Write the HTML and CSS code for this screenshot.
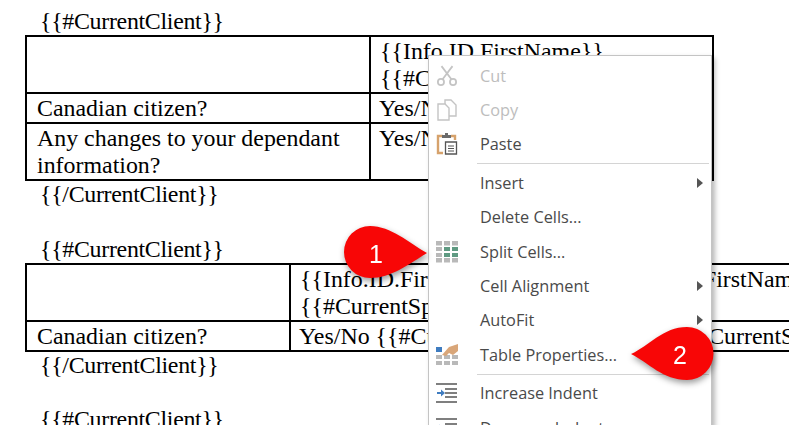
FILE: index.html
```html
<!DOCTYPE html>
<html lang="en">
<head>
<meta charset="utf-8">
<title>Table context menu</title>
<link rel="stylesheet" href="styles.css">
</head>
<body>
<main class="doc">
  <p class="tag">{{#CurrentClient}}</p>
  <table class="grid grid-a">
    <colgroup><col class="a1"><col></colgroup>
    <tr><td></td><td class="indent">{{Info.ID.FirstName}}<br>{{#CurrentSpouse}}</td></tr>
    <tr class="single"><td>Canadian citizen?</td><td>Yes/No</td></tr>
    <tr><td>Any changes to your dependant information?</td><td>Yes/No</td></tr>
  </table>
  <p class="tag">{{/CurrentClient}}</p>
  <p class="tag blank">&nbsp;</p>
  <p class="tag">{{#CurrentClient}}</p>
  <table class="grid grid-b">
    <colgroup><col class="b1"><col class="b2"><col></colgroup>
    <tr><td></td><td class="indent">{{Info.ID.FirstName}}<br>{{#CurrentSpouse}}</td><td class="indent">{{Info.ID.FirstName}}</td></tr>
    <tr class="single"><td>Canadian citizen?</td><td>Yes/No {{#CurrentSpouse}}</td><td>Yes/No {{/CurrentSpouse}}</td></tr>
  </table>
  <p class="tag">{{/CurrentClient}}</p>
  <p class="tag">&nbsp;</p>
  <p class="tag">{{#CurrentClient}}</p>
</main>

<nav class="menu">
  <div class="item off">
    <svg class="ico" viewBox="0 0 20 20"><g fill="none" stroke="#c4c4c4" stroke-width="1.6"><circle cx="4.5" cy="15.5" r="2.8"/><circle cx="15.5" cy="15.5" r="2.8"/><path d="M6 13 15 1M14 13 5 1"/></g></svg>
    <span>Cut</span>
  </div>
  <div class="item off">
    <svg class="ico" viewBox="0 0 20 22"><g fill="#fff" stroke="#c4c4c4" stroke-width="1.4"><path d="M8 1h6l5 5v11H8z"/><path d="M1 5h7l4 4v12H1z"/></g></svg>
    <span>Copy</span>
  </div>
  <div class="item">
    <svg class="ico" viewBox="0 0 20 22"><path d="M6 3H1v17h5" fill="none" stroke="#d6a26c" stroke-width="2.4"/><path d="M14 3h4v4" fill="none" stroke="#d6a26c" stroke-width="2.4"/><path d="M5 2h9v3H5z" fill="#6b6b6b"/><path d="M8 0h3v3H8z" fill="#6b6b6b"/><path d="M8.5 9h11v12h-11z" fill="#fff" stroke="#555" stroke-width="1.3"/><path d="M11 13h6M11 15.5h6M11 18h6" stroke="#555" stroke-width="1"/></svg>
    <span>Paste</span>
  </div>
  <hr class="sep">
  <div class="item"><i class="ico"></i><span>Insert</span><b class="more"></b></div>
  <div class="item"><i class="ico"></i><span>Delete Cells...</span></div>
  <div class="item">
    <svg class="ico" viewBox="0 0 22 22"><path d="M0 0h6v4.500H0zM8 0h6v4.500H8zM16 0h6v4.500h-6zM0 17h6v4.500H0zM8 17h6v4.500H8zM16 17h6v4.500h-6zM0 6h6v4H0zM0 12h6v4H0z" fill="#b9b9b9"/><path d="M8 6h6v4H8zM16 6h6v4h-6zM8 12h6v4H8zM16 12h6v4h-6z" fill="#5f9a82"/></svg>
    <span>Split Cells...</span>
  </div>
  <div class="item"><i class="ico"></i><span>Cell Alignment</span><b class="more"></b></div>
  <div class="item"><i class="ico"></i><span>AutoFit</span><b class="more"></b></div>
  <div class="item">
    <svg class="ico" viewBox="0 0 22 22"><path d="M0 11h6v4H0zM8 11h6v4H8zM16 11h6v4h-6zM0 17h6v4H0zM8 17h6v4H8zM16 17h6v4h-6z" fill="#b9b9b9"/><path d="M0 3h6v5H0z" fill="#3f7cc0"/><path d="M6 11 13 3l9-3v7l-5 4-4-2-3 3z" fill="#d9a679"/></svg>
    <span>Table Properties...</span>
  </div>
  <hr class="sep">
  <div class="item">
    <svg class="ico" viewBox="0 0 22 20"><path d="M0 1h21M9 6h12M9 10h12M9 14h12M0 19h21" stroke="#555" stroke-width="1.6"/><path d="M1 10h5" stroke="#3f7cc0" stroke-width="2"/><path d="M5 6.500 9 10l-4 3.500z" fill="#3f7cc0"/></svg>
    <span>Increase Indent</span>
  </div>
  <div class="item">
    <svg class="ico" viewBox="0 0 22 20"><path d="M0 1h21M9 6h12M9 10h12M9 14h12M0 19h21" stroke="#555" stroke-width="1.6"/><path d="M3 10h5" stroke="#3f7cc0" stroke-width="2"/><path d="M4 6.500 0 10l4 3.500z" fill="#3f7cc0"/></svg>
    <span>Decrease Indent</span>
  </div>
</nav>

<div class="callout c1">
  <svg viewBox="0 0 90 60" width="90" height="60"><path d="M86 28C68 18 50 1 29 1A26 26 0 0 0 29 53C50 53 68 39 86 28Z" fill="#f80606"/></svg>
  <span>1</span>
</div>
<div class="callout c2">
  <svg viewBox="0 0 90 60" width="90" height="60"><path d="M4 29C22 21 36 2 60 2A26.500 26.500 0 0 1 60 55C36 55 22 38 4 29Z" fill="#f80606"/></svg>
  <span>2</span>
</div>
</body>
</html>
```

FILE: styles.css
```css
html, body {
  margin: 0;
  padding: 0;
  height: 425px;
  overflow: hidden;
  background: #fff;
}
body {
  position: relative;
  width: 789px;
}
.doc {
  padding: 8px 0 0 25px;
  font-family: "Liberation Serif", "Times New Roman", serif;
  font-size: 23.9px;
  line-height: 27px;
  color: #000;
}
.tag {
  margin: 0 0 0 15px;
  letter-spacing: -0.3px;
  white-space: nowrap;
}
.blank { margin-bottom: 1px; }
.grid {
  border-collapse: collapse;
  table-layout: fixed;
}
.grid td {
  border: 2px solid #000;
  padding: 0.5px 8px 0.5px 10px;
  vertical-align: top;
}
.grid td + td { padding-left: 8px; }
.grid td.indent { padding-left: 9px; }
.grid-a { width: 689px; }
.a1 { width: 344px; }
.grid-b { width: 900px; }
.b1 { width: 264px; }
.b2 { width: 303px; }
.grid-b td { white-space: nowrap; overflow: hidden; }

.menu {
  position: absolute;
  left: 428px;
  top: 55px;
  width: 284px;
  height: 372px;
  box-sizing: border-box;
  padding: 2.500px 0 0;
  background: #fff;
  border: 1px solid #c4c4c4;
  box-shadow: 3px 3px 5px rgba(0, 0, 0, 0.28);
  font-family: "Open Sans", "Noto Sans", sans-serif;
  font-size: 16.3px;
  color: #4a4a4a;
}
.item {
  display: flex;
  align-items: center;
  height: 34.4px;
  padding-left: 7px;
  position: relative;
}
.item span { margin-left: 22px; }
.ico {
  display: block;
  flex: none;
  width: 22px;
  height: 22px;
}
.off { color: #bdbdbd; }
.more {
  position: absolute;
  right: 8px;
  top: 12px;
  border-left: 6px solid #555;
  border-top: 5px solid transparent;
  border-bottom: 5px solid transparent;
}
.sep {
  height: 1px;
  margin: 1.500px 2px 1.500px 48px;
  border: 0;
  background: #d4d4d4;
}
.callout {
  position: absolute;
  width: 90px;
  height: 60px;
  filter: drop-shadow(1px 3px 3px rgba(0, 0, 0, 0.4));
}
.callout svg { display: block; }
.callout span {
  position: absolute;
  color: #fff;
  font-family: "Liberation Sans", Arial, sans-serif;
  font-size: 25px;
  line-height: 28px;
}
.c1 { left: 341px; top: 225px; }
.c1 span { left: 28px; top: 15px; }
.c2 { left: 627px; top: 325px; }
.c2 span { left: 46px; top: 16px; }
```
